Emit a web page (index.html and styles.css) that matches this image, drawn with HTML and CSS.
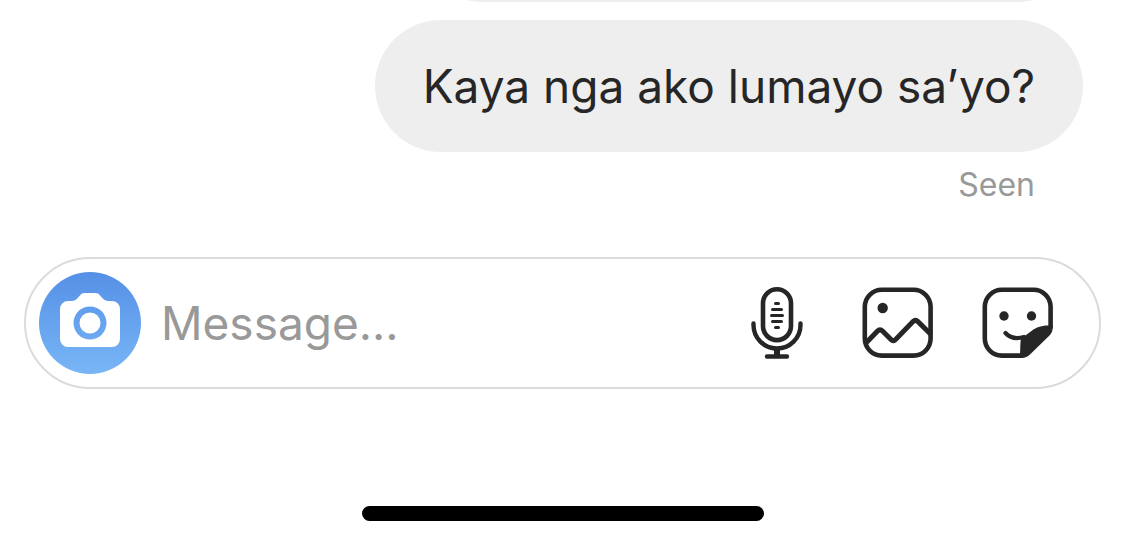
FILE: index.html
```html
<!DOCTYPE html>
<html lang="tl">
<head>
    <meta charset="UTF-8">
    <meta name="viewport" content="width=device-width, initial-scale=1.0">
    <title>Messages</title>
    <link rel="stylesheet" href="styles.css">
</head>
<body>
    <main class="thread">
        <div class="bubble bubble-previous"></div>
        <div class="bubble">Kaya nga ako lumayo sa’yo?</div>
        <div class="receipt">Seen</div>
    </main>

    <form class="composer">
        <button type="button" class="camera-btn" aria-label="Camera">
            <svg width="60" height="54" viewBox="0 0 60 54">
                <path fill="#fff" fill-rule="evenodd" d="M8 8H11C15 8 17 6 19 3.5C21 1 22 0 25 0H35C38 0 39 1 41 3.5C43 6 45 8 49 8H52A8 8 0 0 1 60 16V46A8 8 0 0 1 52 54H8A8 8 0 0 1 0 46V16A8 8 0 0 1 8 8ZM30 13.5A16.5 16.5 0 1 0 30 46.5A16.5 16.5 0 1 0 30 13.5Z"/>
                <circle cx="30" cy="30" r="10.5" fill="#fff"/>
            </svg>
        </button>
        <input type="text" class="message-input" placeholder="Message..." aria-label="Message">
        <div class="actions">
            <button type="button" class="icon-btn" aria-label="Voice message">
                <svg class="icon" viewBox="0 0 72 72">
                    <rect x="21" y="2.3" width="28" height="50.8" rx="14"/>
                    <path stroke-width="3" d="M33.5 16.6h3M30.500 22.4h9M29.500 28.4h11M30.500 34.4h9M33.500 40.4h3"/>
                    <path stroke-width="4.4" d="M11.500 36.5V38A23.500 23.500 0 0 0 58.500 38V36.500M25 69.500H45"/>
                    <path stroke-width="6" stroke-linecap="butt" d="M35 61V69"/>
                </svg>
            </button>
            <button type="button" class="icon-btn" aria-label="Photo">
                <svg class="icon" viewBox="0 0 72 72">
                    <rect x="2.8" y="2.8" width="65.8" height="65.8" rx="17"/>
                    <path stroke-width="5" d="M4 56L15.500 44Q18 41.500 20.500 44L29 52.500Q31.300 54.800 33.600 52.500L51 34.600Q53.500 32.200 56 34.600L68 46.500"/>
                    <circle class="dot" cx="20.700" cy="21" r="5.200"/>
                </svg>
            </button>
            <button type="button" class="icon-btn" aria-label="Sticker">
                <svg class="icon" viewBox="0 0 72 72">
                    <path d="M40 68.600H19.800A17 17 0 0 1 2.800 51.600V19.800A17 17 0 0 1 19.800 2.800H51.600A17 17 0 0 1 68.600 19.800V40"/>
                    <path stroke-width="4.200" d="M23.500 46C28 51 35 52 42 50"/>
                    <path class="dot" d="M39 51C47 48 51 38.500 66 38.500L70.800 38C70.800 44 70 46 67 49L49 66.500C46 69.500 44 70.900 38.500 70.900L38 67C38.500 61 38 57 39 51Z"/>
                    <circle class="dot" cx="22" cy="29" r="4.700"/>
                    <circle class="dot" cx="49.500" cy="29" r="4.700"/>
                </svg>
            </button>
        </div>
    </form>

    <div class="home-indicator"></div>
</body>
</html>
```

FILE: styles.css
```css
body {
    display: flex;
    flex-direction: column;
    height: 100vh;
    margin: 0;
    overflow: hidden;
    background-color: #fff;
    color: #262626;
    font-family: Inter, "Liberation Sans", sans-serif;
}
.thread {
    display: flex;
    flex: 1;
    flex-direction: column;
    align-items: flex-end;
    justify-content: flex-end;
    min-height: 0;
    padding: 0 42px 57px;
}
.bubble {
    box-sizing: border-box;
    flex-shrink: 0;
    min-height: 132px;
    margin-bottom: 18px;
    padding: 36px 48px;
    border-radius: 66px;
    background-color: #eee;
    font-size: 46px;
    line-height: 60px;
}
.bubble-previous {
    width: 64%;
}
.receipt {
    padding-right: 48px;
    color: #999;
    font-size: 32px;
    line-height: 30px;
}
.composer {
    display: flex;
    align-items: center;
    margin: 0 24px;
    padding: 13px 45px 13px 13px;
    border: 2px solid #dbdbdb;
    border-radius: 66px;
}
button {
    padding: 0;
    border: none;
    background: none;
    cursor: pointer;
}
.camera-btn {
    display: flex;
    flex-shrink: 0;
    align-items: center;
    justify-content: center;
    width: 102px;
    height: 102px;
    padding-bottom: 6px;
    border-radius: 50%;
    background: linear-gradient(#5590e6, #78b6f6);
}
.message-input {
    flex: 1;
    min-width: 0;
    padding: 0 20px;
    border: none;
    outline: none;
    background: none;
    color: #262626;
    font-family: inherit;
    font-size: 46px;
    line-height: 60px;
}
.message-input::placeholder {
    color: #999;
    opacity: 1;
}
.actions {
    display: flex;
    gap: 48px;
}
.icon-btn {
    display: flex;
}
.icon {
    width: 72px;
    height: 72px;
    fill: none;
    stroke: #262626;
    stroke-width: 4.6;
    stroke-linecap: round;
    stroke-linejoin: round;
}
.dot {
    fill: #262626;
    stroke: none;
}
.home-indicator {
    width: 402px;
    height: 15px;
    margin: 117px auto 24px;
    border-radius: 8px;
    background-color: #000;
}
```
